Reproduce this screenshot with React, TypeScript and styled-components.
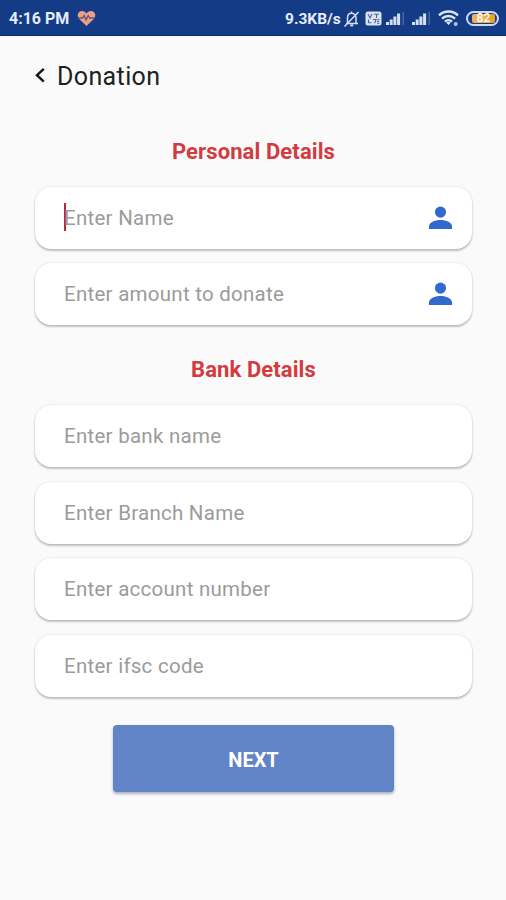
import React from "react";
import styled, { createGlobalStyle } from "styled-components";

const GlobalStyle = createGlobalStyle`
  * { box-sizing: border-box; }
  body {
    margin: 0;
    background: #fafafa;
    font-family: Roboto, "Liberation Sans", sans-serif;
  }
`;

const Screen = styled.div`
  height: 900px;
  display: flex;
  flex-direction: column;
  background: #fafafa;
`;

const StatusBar = styled.header`
  height: 36px;
  flex: none;
  display: flex;
  align-items: center;
  padding: 2px 7px 0 9px;
  background: #143b85;
  border-bottom: 1px solid #0c2a70;
  color: #e6edfb;
  font-weight: 700;
  line-height: 20px;
`;

const Clock = styled.span`
  width: 68px;
  font-size: 16px;
  white-space: nowrap;
`;

const NetworkSpeed = styled.span`
  margin-left: auto;
  width: 58px;
  font-size: 15.5px;
  white-space: nowrap;
`;

const Glyph = styled.svg<{ $gap?: number }>`
  display: block;
  flex: none;
  margin-left: ${({ $gap = 0 }) => $gap}px;
`;

const Battery = styled.span`
  width: 33px;
  height: 15px;
  margin-left: 6px;
  padding: 1px 5px;
  display: flex;
  border: 2px solid #cfdaf0;
  border-radius: 8px;
`;

const Charge = styled.span`
  flex: 1;
  display: flex;
  align-items: center;
  justify-content: center;
  border-radius: 2px;
  background: linear-gradient(90deg, #f0ad5f 0 60%, #eda329 60%);
  color: #fff5e0;
  font-size: 12px;
  line-height: 9px;
  margin: 0 -3px 0 -1px;
`;

const TitleBar = styled.div`
  height: 80px;
  flex: none;
  display: flex;
  align-items: center;
  padding-left: 33px;
`;

const Title = styled.h1`
  margin: 2px 0 0 10px;
  font-size: 25px;
  font-weight: 400;
  line-height: 30px;
  letter-spacing: 0.38px;
  color: #202020;
`;

const Form = styled.main`
  display: flex;
  flex-direction: column;
  padding: 0 34px 0 35px;
`;

const SectionTitle = styled.h2<{ $tracking: number }>`
  height: 71px;
  margin: 0;
  font-size: 22px;
  font-weight: 700;
  line-height: 71px;
  letter-spacing: ${({ $tracking }) => $tracking}px;
  text-align: center;
  color: #d23c40;
`;

const FieldGroup = styled.section<{ $gap: number; $after: number }>`
  display: flex;
  flex-direction: column;
  gap: ${({ $gap }) => $gap}px;
  margin-bottom: ${({ $after }) => $after}px;
`;

const Field = styled.label`
  height: 62px;
  display: flex;
  align-items: center;
  justify-content: space-between;
  padding: 0 20px 0 29px;
  border-radius: 16px;
  background: #fff;
  box-shadow: 0 2px 2px rgba(0, 0, 0, 0.22), 0 0 2px rgba(0, 0, 0, 0.16);
`;

const Hint = styled.span`
  font-size: 20.5px;
  line-height: 28px;
  letter-spacing: 0.26px;
  white-space: nowrap;
  color: #9b9b9b;
`;

const Caret = styled.span`
  width: 2px;
  height: 28px;
  margin: -2px -2px 0 0;
  background: #bd2731;
`;

const Entry = styled.span`
  display: flex;
  align-items: center;
`;

const NextButton = styled.button`
  width: 281px;
  height: 67px;
  margin-left: 78px;
  padding: 2px 0 0;
  border: 0;
  border-radius: 4px;
  background: #6084c6;
  box-shadow: 0 2px 3px rgba(40, 60, 90, 0.38);
  color: #fff;
  font: 700 20px/24px Roboto, sans-serif;
`;

const HeartIcon = () => (
  <Glyph width="19" height="17" viewBox="0 0 19 17">
    <path d="M9.5 16 2.2 8.9C-.9 4.8 1.4 1 5 1c2.1 0 3.6 1 4.5 2.5C10.4 2 11.9 1 14 1c3.6 0 5.9 3.8 2.8 7.9Z" fill="#e6a08b" />
    <path d="M1.5 8h4l1.7-2.5L9 10l2.2-4.5L12.700 8h4.8" fill="none" stroke="#71506b" strokeWidth="1.3" />
  </Glyph>
);

const MutedBellIcon = () => (
  <Glyph width="17" height="18" viewBox="0 0 17 18" fill="none" stroke="#d5dff2" strokeWidth="1.5">
    <path d="M3 13.5h12M4.5 13V8c0-3 1.6-4.8 4-4.8S13 5 13 8v5M8.5 3V1.5M1.5 16.5 15.5 2" />
    <path d="M7.2 15.4h3" strokeWidth="2" />
  </Glyph>
);

const VolteIcon = () => (
  <Glyph $gap={5} width="17" height="15" viewBox="0 0 17 15">
    <rect x=".5" y=".5" width="16" height="14" rx="2.5" fill="#dbe4f4" />
    <path d="m3 3 2 4 2-4M9 3.2h5M11.5 3v4M3.500 8.500v3.300h3M8 8.500h3l-1.400 3.800M12 8.800h2.500M12 10.500h2M12 12.200h2.500" fill="none" stroke="#4a649b" strokeWidth="1.1" />
  </Glyph>
);

const SignalIcon = ({ gap }: { gap: number }) => (
  <Glyph $gap={gap} width="19" height="15" viewBox="0 0 19 15">
    <path d="M0 11h3v3H0zM3.700 8.500h3V14h-3zM7.400 5.500h3V14h-3zM11.100 2.500h3V14h-3z" fill="#d5e0f3" />
    <path d="M16.500 1H18v13h-1.500z" fill="#4868a5" />
  </Glyph>
);

const WifiIcon = () => (
  <Glyph $gap={7} width="22" height="17" viewBox="0 0 22 17" fill="none" stroke="#dbe6f7" strokeWidth="2.4">
    <path d="M1 5.300c5.500-5 13.500-5 19 0M4 8.600c3.800-3.400 9.200-3.400 13 0M7 11.700c2-1.900 5-1.900 7 0" />
    <path d="m8.200 12.500 2.300 2.600 2.300-2.600c-1.400-1-3.200-1-4.600 0Z" fill="#dbe6f7" stroke="none" />
    <circle cx="17.700" cy="14" r="2" fill="#a9c2e5" stroke="none" />
  </Glyph>
);

const BackIcon = () => (
  <Glyph width="14" height="20" viewBox="0 0 14 20">
    <path d="m10.800 2.800-6.800 6.400 6.800 6.400" fill="none" stroke="#171717" strokeWidth="2.500" />
  </Glyph>
);

const PersonIcon = () => (
  <Glyph width="23" height="24" viewBox="0 0 23 24">
    <circle cx="11.500" cy="6.100" r="5.600" fill="#3169cf" />
    <path d="M11.500 14C5.500 14 0 16.500 0 20.500V23h23v-2.500C23 16.500 17.500 14 11.500 14Z" fill="#3169cf" />
  </Glyph>
);

type FieldItem = { hint: string; focused?: boolean };

const personalFields: FieldItem[] = [
  { hint: "Enter Name", focused: true },
  { hint: "Enter amount to donate" },
];

const bankFields: FieldItem[] = [
  { hint: "Enter bank name" },
  { hint: "Enter Branch Name" },
  { hint: "Enter account number" },
  { hint: "Enter ifsc code" },
];

const FormField = ({ item, person }: { item: FieldItem; person?: boolean }) => (
  <Field>
    <Entry>
      {item.focused && <Caret />}
      <Hint>{item.hint}</Hint>
    </Entry>
    {person && <PersonIcon />}
  </Field>
);

export default function App() {
  return (
    <Screen>
      <GlobalStyle />
      <StatusBar>
        <Clock>4:16 PM</Clock>
        <HeartIcon />
        <NetworkSpeed>9.3KB/s</NetworkSpeed>
        <MutedBellIcon />
        <VolteIcon />
        <SignalIcon gap={4} />
        <SignalIcon gap={7} />
        <WifiIcon />
        <Battery>
          <Charge>82</Charge>
        </Battery>
      </StatusBar>
      <TitleBar>
        <BackIcon />
        <Title>Donation</Title>
      </TitleBar>
      <Form>
        <SectionTitle $tracking={0.1}>Personal Details</SectionTitle>
        <FieldGroup $gap={14} $after={9}>
          {personalFields.map((item) => (
            <FormField key={item.hint} item={item} person />
          ))}
        </FieldGroup>
        <SectionTitle $tracking={0.1}>Bank Details</SectionTitle>
        <FieldGroup $gap={14.7} $after={28}>
          {bankFields.map((item) => (
            <FormField key={item.hint} item={item} />
          ))}
        </FieldGroup>
        <NextButton type="button">NEXT</NextButton>
      </Form>
    </Screen>
  );
}
